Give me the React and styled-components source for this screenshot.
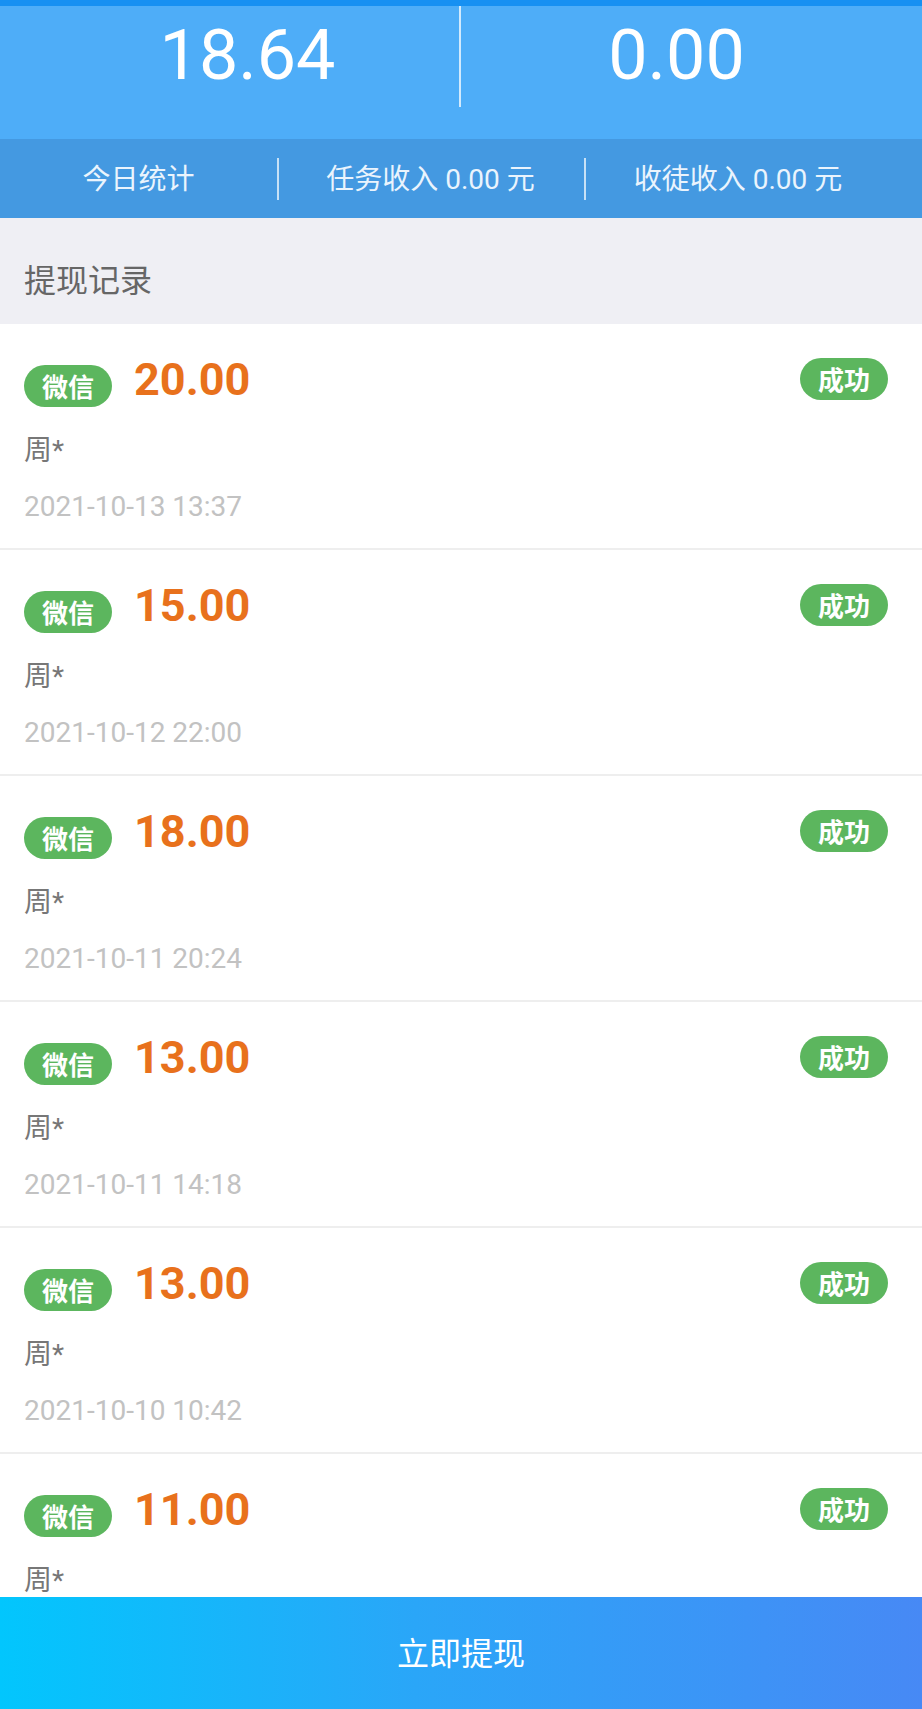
import React from "react";
import styled, { createGlobalStyle } from "styled-components";

const GlobalStyle = createGlobalStyle`
  * { box-sizing: border-box; }
  html, body { margin: 0; padding: 0; }
  body {
    font-family: Roboto, "Noto Sans CJK SC", "Noto Sans", sans-serif;
    background: #ffffff;
  }
`;

const Page = styled.div`
  height: 100vh;
  display: flex;
  flex-direction: column;
  overflow: hidden;
  background: #ffffff;
`;

const Header = styled.header`
  flex-shrink: 0;
  background: #4eadf8;
  border-top: 6px solid #1790f2;
  padding-bottom: 32px;
`;

const Balances = styled.div`
  display: grid;
  grid-template-columns: 1fr 1fr;
  height: 101px;
`;

const Balance = styled.div`
  display: flex;
  justify-content: center;
  color: #ffffff;
  font-family: Roboto, sans-serif;
  font-size: 70px;
  line-height: 98px;
  padding-left: ${(p) => p.$padLeft || 0}px;
  padding-right: ${(p) => p.$padRight || 0}px;
  border-right: ${(p) => (p.$divider ? "2px solid rgba(255,255,255,0.75)" : "none")};
`;

const Stats = styled.div`
  flex-shrink: 0;
  display: grid;
  grid-template-columns: 277px 307px 1fr;
  height: 79px;
  background: #4499e1;
`;

const StatCell = styled.div`
  position: relative;
  display: flex;
  align-items: center;
  justify-content: center;
  color: #eaf4fd;
  font-size: 28px;
  padding-bottom: 4px;
  padding-right: ${(p) => p.$padRight || 0}px;
  &::before {
    content: "";
    display: ${(p) => (p.$divider ? "block" : "none")};
    position: absolute;
    left: 0;
    top: 19px;
    width: 2px;
    height: 42px;
    background: rgba(255, 255, 255, 0.7);
  }
`;

const SectionTitle = styled.div`
  flex-shrink: 0;
  background: #efeff4;
  padding: 43px 24px 23px;
  height: 106px;
  font-size: 32px;
  line-height: 40px;
  color: #666666;
`;

const List = styled.div`
  flex: 1;
  min-height: 0;
  overflow: hidden;
`;

const Item = styled.div`
  padding: 29px 34px 21px 24px;
  border-bottom: 2px solid #eeeeee;
`;

const TopRow = styled.div`
  display: flex;
  justify-content: space-between;
  align-items: flex-start;
  height: 53px;
`;

const LeftGroup = styled.div`
  display: flex;
  align-items: flex-start;
  gap: 22px;
`;

const Pill = styled.span`
  display: inline-flex;
  align-items: center;
  justify-content: center;
  height: 42px;
  padding: 0 18px;
  border-radius: 21px;
  background: #5cb65e;
  color: #ffffff;
  font-family: "Noto Sans CJK SC", sans-serif;
  font-weight: 700;
  font-size: 26px;
  line-height: 42px;
  margin-top: ${(p) => p.$offset || 0}px;
`;

const Amount = styled.span`
  font-family: Roboto, sans-serif;
  font-weight: 700;
  font-size: 45px;
  line-height: 53px;
  color: #e8711c;
`;

const Name = styled.div`
  margin-top: 25px;
  height: 40px;
  font-size: 28px;
  line-height: 40px;
  color: #777777;
`;

const DateText = styled.div`
  margin-top: 16px;
  height: 40px;
  font-size: 28px;
  line-height: 40px;
  color: #c2c2c2;
`;

const ActionButton = styled.button`
  flex-shrink: 0;
  height: 112px;
  width: 100%;
  border: none;
  margin: 0;
  padding: 0 0 4px;
  background: linear-gradient(to right, #02c6fd 0%, #2aa6f8 45%, #4789f5 100%);
  color: #ffffff;
  font-family: "Noto Sans CJK SC", sans-serif;
  font-size: 32px;
  cursor: pointer;
`;

const records = [
  { amount: "20.00", date: "2021-10-13 13:37" },
  { amount: "15.00", date: "2021-10-12 22:00" },
  { amount: "18.00", date: "2021-10-11 20:24" },
  { amount: "13.00", date: "2021-10-11 14:18" },
  { amount: "13.00", date: "2021-10-10 10:42" },
  { amount: "11.00", date: "2021-10-09 18:05" },
];

export default function App() {
  return (
    <Page>
      <GlobalStyle />
      <Header>
        <Balances>
          <Balance $divider $padLeft={36}>18.64</Balance>
          <Balance $padRight={30}>0.00</Balance>
        </Balances>
      </Header>
      <Stats>
        <StatCell>今日统计</StatCell>
        <StatCell $divider>任务收入 0.00 元</StatCell>
        <StatCell $divider $padRight={30}>收徒收入 0.00 元</StatCell>
      </Stats>
      <SectionTitle>提现记录</SectionTitle>
      <List>
        {records.map((r, i) => (
          <Item key={i}>
            <TopRow>
              <LeftGroup>
                <Pill $offset={12}>微信</Pill>
                <Amount>{r.amount}</Amount>
              </LeftGroup>
              <Pill $offset={5}>成功</Pill>
            </TopRow>
            <Name>周*</Name>
            <DateText>{r.date}</DateText>
          </Item>
        ))}
      </List>
      <ActionButton>立即提现</ActionButton>
    </Page>
  );
}
